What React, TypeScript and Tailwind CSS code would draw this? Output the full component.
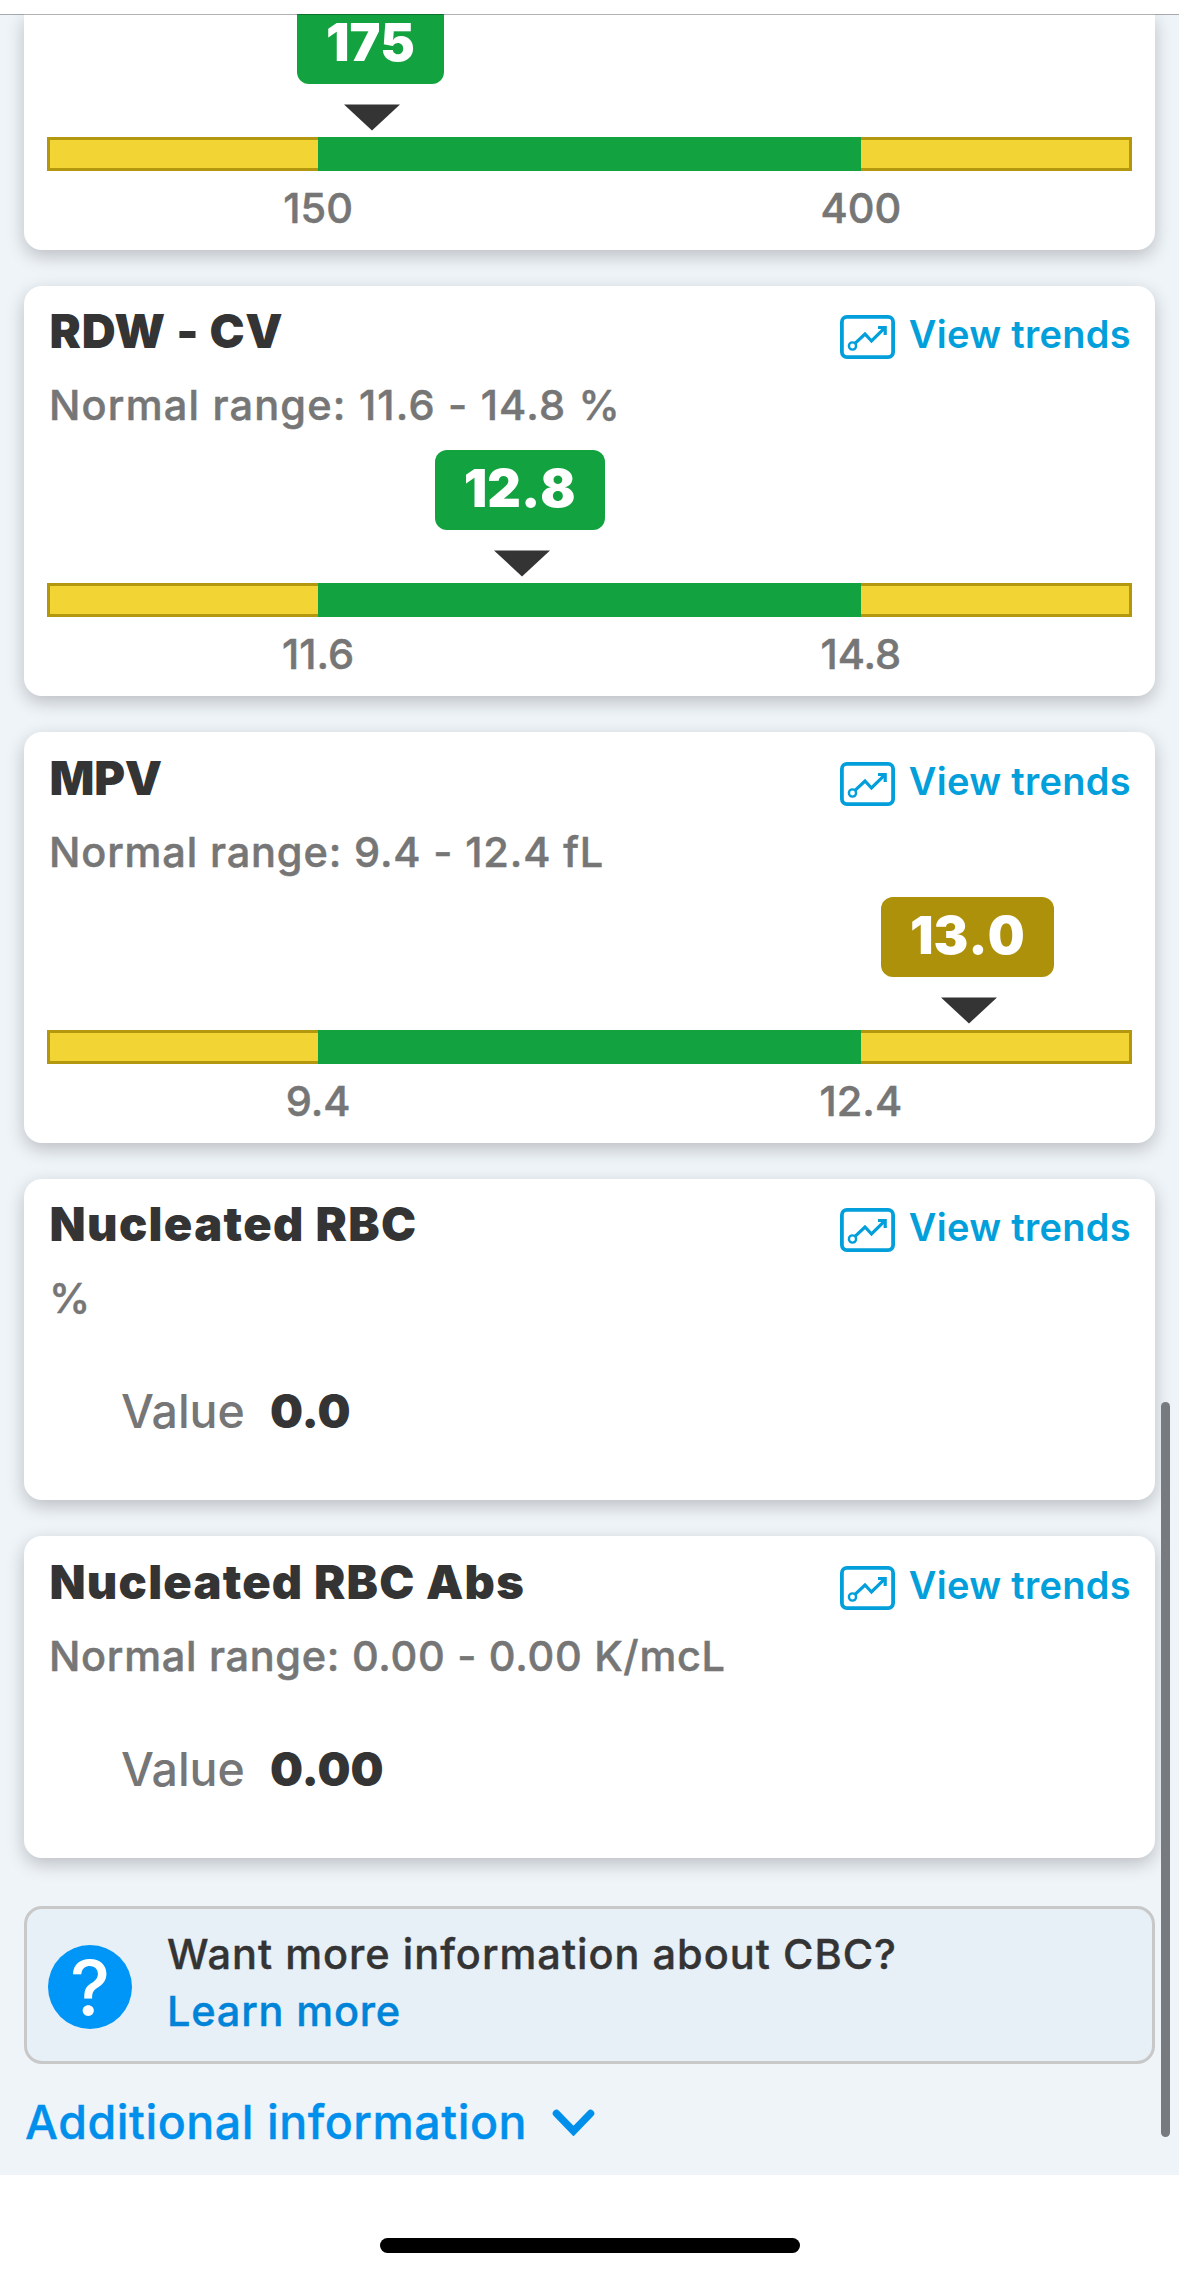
type Result = {
  name: string;
  range: string;
  value: string;
  low?: string;
  high?: string;
  titleClass: string;
  rangeClass: string;
  cardClass: string;
};

const results: Result[] = [
  {
    name: "RDW - CV",
    range: "Normal range: 11.6 - 14.8 %",
    value: "12.8",
    low: "11.6",
    high: "14.8",
    titleClass: "tracking-[0.8px]",
    rangeClass: "tracking-[1.2px]",
    cardClass: "h-[410px] pt-[17px]",
  },
  {
    name: "MPV",
    range: "Normal range: 9.4 - 12.4 fL",
    value: "13.0",
    low: "9.4",
    high: "12.4",
    titleClass: "tracking-[-0.3px]",
    rangeClass: "tracking-[0.85px]",
    cardClass: "h-[411px] pt-[18px]",
  },
  {
    name: "Nucleated RBC",
    range: "%",
    value: "0.0",
    titleClass: "tracking-[1.35px]",
    rangeClass: "tracking-normal",
    cardClass: "h-[321px] pt-[17px]",
  },
  {
    name: "Nucleated RBC Abs",
    range: "Normal range: 0.00 - 0.00 K/mcL",
    value: "0.00",
    titleClass: "tracking-[1.2px]",
    rangeClass: "tracking-[0.7px]",
    cardClass: "h-[322px] pt-[18px]",
  },
];

// The normal band takes the middle half of the bar.
const toPercent = (value: number, low: number, high: number): number => 25 + (50 * (value - low)) / (high - low);

function TrendIcon() {
  return (
    <svg width="55" height="44" viewBox="0 0 55 44" fill="none" stroke="currentColor">
      <rect x="1.9" y="1.9" width="51.2" height="40.2" rx="5" strokeWidth="3.8" />
      <circle cx="12.5" cy="31" r="3.6" strokeWidth="2.4" />
      <path d="M15.3 28.2 25 19l6.5 7L44 13.6" strokeWidth="3.2" />
      <path d="M38 12.5h7.2v7.5" strokeWidth="3.2" />
    </svg>
  );
}

function Gauge({ value, low, high }: { value: string; low: string; high: string }) {
  const percent = toPercent(Number(value), Number(low), Number(high));
  const inRange = percent >= 25 && percent <= 75;

  return (
    <div className="mx-[22.8px] shrink-0">
      <div className="flex w-0 flex-col items-center" style={{ marginLeft: `${percent}%` }}>
        <div
          className={`mr-[4px] h-20 rounded-xl px-[29px] pt-[13px] text-[52px] leading-[51px] font-black whitespace-nowrap text-white [font-kerning:none] ${
            inRange ? "bg-[#12a340]" : "bg-[#ad910a]"
          }`}
        >
          {value}
        </div>
        <svg className="mt-5 shrink-0" width="56" height="27" viewBox="0 0 56 27">
          <path d="M0 .5h56L28 26.5z" fill="#343434" />
        </svg>
      </div>
      <div className="mt-[6px] flex h-[34px]">
        <div className="w-1/4 border-[3px] border-r-0 border-[#b3980f] bg-[#f2d435]" />
        <div className="w-1/2 bg-[#12a340]" />
        <div className="w-1/4 border-[3px] border-l-0 border-[#b3980f] bg-[#f2d435]" />
      </div>
      <div className="flex h-[79px] justify-center pt-[11px] text-[41.5px] leading-[52px] font-medium text-[#767676] [-webkit-text-stroke:0.5px]">
        <div className="flex w-1/2 justify-between">
          <span className="flex w-0 justify-center">{low}</span>
          <span className="flex w-0 justify-center">{high}</span>
        </div>
      </div>
    </div>
  );
}

function ResultCard({ result }: { result: Result }) {
  return (
    <section
      className={`flex shrink-0 flex-col rounded-[18px] bg-white shadow-[0_6px_18px_rgba(0,0,0,0.22)] ${result.cardClass}`}
    >
      <div className="flex h-14 justify-between pr-6 pl-[25.5px]">
        <h2 className={`text-[47px] leading-[56px] font-black whitespace-nowrap ${result.titleClass}`}>{result.name}</h2>
        <a className="flex text-[38px] leading-[62px] font-semibold tracking-[0.3px] whitespace-nowrap text-[#029fdb]">
          <span className="mt-3 mr-[14px]">
            <TrendIcon />
          </span>
          View trends
        </a>
      </div>
      <p
        className={`mt-5 pl-[25px] text-[41.5px] leading-[52px] font-medium whitespace-nowrap text-[#767676] [-webkit-text-stroke:0.5px] ${result.rangeClass}`}
      >
        {result.range}
      </p>
      {result.low && result.high ? (
        <div className="mt-[19px]">
          <Gauge value={result.value} low={result.low} high={result.high} />
        </div>
      ) : (
        <div className="mt-[59px] flex pl-[97px] text-[46.5px] leading-[56px]">
          <span className="w-[149px] font-medium text-[#767676]">Value</span>
          <span className="font-black">{result.value}</span>
        </div>
      )}
    </section>
  );
}

export default function App() {
  return (
    <div className="relative flex h-[2277px] w-[1179px] flex-col overflow-hidden bg-white font-['Inter',sans-serif] text-[#343434]">
      <header className="relative z-10 -mb-px h-[15px] shrink-0 border-b border-black/30 bg-white bg-clip-padding" />

      <main className="h-[2161px] shrink-0 overflow-hidden bg-[#eff4f9] pr-6 pl-6">
        <div className="flex flex-col gap-9">
          <section className="flex h-[236px] shrink-0 flex-col justify-end rounded-b-[18px] bg-white shadow-[0_6px_18px_rgba(0,0,0,0.22)]">
            <Gauge value="175" low="150" high="400" />
          </section>
          {results.map((result) => (
            <ResultCard key={result.name} result={result} />
          ))}
        </div>

        <div className="mt-12 flex h-[158px] rounded-[18px] border-[3px] border-[#c8c8c8] bg-[#e7eff7] pl-[21px]">
          <div className="mt-9 flex size-[84px] items-center justify-center rounded-full bg-[#0096f7] text-[76px] leading-none font-medium text-white">
            ?
          </div>
          <div className="ml-[35px] pt-[17px] text-[41.5px] leading-[57px] font-medium whitespace-nowrap [-webkit-text-stroke:0.4px]">
            <p className="tracking-[1px]">Want more information about CBC?</p>
            <a className="tracking-[0.8px] text-[#0084d8]">Learn more</a>
          </div>
        </div>

        <div className="mt-[30px] flex pl-px text-[46.5px] leading-[56px] font-medium text-[#0090ec] [-webkit-text-stroke:0.4px]">
          <span className="tracking-[0.55px] whitespace-nowrap">Additional information</span>
          <svg className="mt-[15px] ml-[25px]" width="43" height="27" viewBox="0 0 43 27" fill="none">
            <path d="M4.5 4.5 21.5 22 38.5 4.5" stroke="currentColor" strokeWidth="7.5" strokeLinecap="round" />
          </svg>
        </div>
      </main>

      <footer className="flex flex-1 justify-center pt-[63px]">
        <div className="h-[15px] w-[420px] rounded-full bg-black" />
      </footer>

      {/* scroll indicator */}
      <div className="absolute top-[1402px] right-[9px] h-[735px] w-[9px] rounded-full bg-[#777a7f]" />
    </div>
  );
}
